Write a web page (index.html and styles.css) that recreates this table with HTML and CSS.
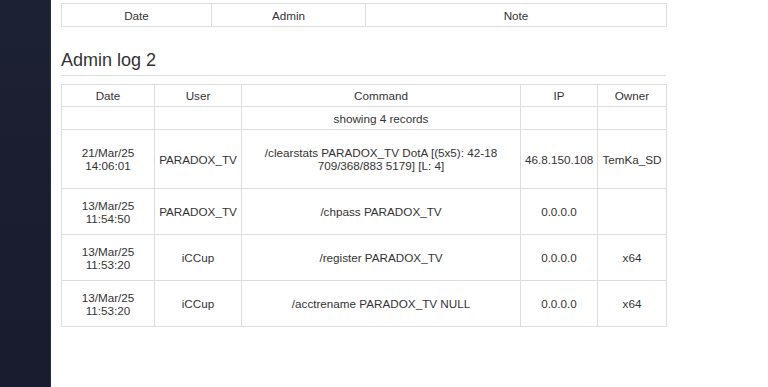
FILE: index.html
```html
<!DOCTYPE html>
<html lang="en">
<head>
<meta charset="utf-8">
<title>Admin log</title>
<link rel="stylesheet" href="styles.css">
</head>
<body>
<div class="layout">
  <aside class="sidebar"></aside>
  <main class="content">
    <table class="log log-top">
      <colgroup>
        <col class="c-tdate"><col class="c-tadmin"><col class="c-tnote">
      </colgroup>
      <thead>
        <tr class="row-head"><th>Date</th><th>Admin</th><th>Note</th></tr>
      </thead>
    </table>

    <h2 class="section-title">Admin log 2</h2>

    <table class="log">
      <colgroup>
        <col class="c-date"><col class="c-user"><col class="c-cmd"><col class="c-ip"><col class="c-owner">
      </colgroup>
      <thead>
        <tr class="row-head"><th>Date</th><th>User</th><th>Command</th><th>IP</th><th>Owner</th></tr>
      </thead>
      <tbody>
        <tr class="row-info"><td></td><td></td><td>showing 4 records</td><td></td><td></td></tr>
        <tr class="row-tall">
          <td>21/Mar/25 14:06:01</td>
          <td>PARADOX_TV</td>
          <td>/clearstats PARADOX_TV DotA [(5x5): 42-18 709/368/883 5179] [L: 4]</td>
          <td>46.8.150.108</td>
          <td>TemKa_SD</td>
        </tr>
        <tr class="row-entry">
          <td>13/Mar/25 11:54:50</td>
          <td>PARADOX_TV</td>
          <td>/chpass PARADOX_TV</td>
          <td>0.0.0.0</td>
          <td></td>
        </tr>
        <tr class="row-entry">
          <td>13/Mar/25 11:53:20</td>
          <td>iCCup</td>
          <td>/register PARADOX_TV</td>
          <td>0.0.0.0</td>
          <td>x64</td>
        </tr>
        <tr class="row-entry">
          <td>13/Mar/25 11:53:20</td>
          <td>iCCup</td>
          <td>/acctrename PARADOX_TV NULL</td>
          <td>0.0.0.0</td>
          <td>x64</td>
        </tr>
      </tbody>
    </table>
  </main>
</div>
</body>
</html>
```

FILE: styles.css
```css
html, body {
  margin: 0;
  height: 100%;
  background: #ffffff;
}

body {
  font-family: "Liberation Sans", Arial, sans-serif;
  color: #333333;
}

.layout {
  display: flex;
  min-height: 100%;
}

.sidebar {
  flex: 0 0 50px;
  background: linear-gradient(180deg, #1d2134 0%, #1b1f31 30%, #191d2f 60%, #181c2e 100%);
  border-right: 1px solid #2a2e3f;
}

.content {
  flex: 1;
  padding: 3px 0 0 10px;
}

.log {
  width: 605px;
  table-layout: fixed;
  border-collapse: collapse;
  font-size: 11.7px;
  line-height: 13px;
  color: #333333;
}

.log th,
.log td {
  border: 1px solid #dddddd;
  padding: 0 4px;
  text-align: center;
  vertical-align: middle;
  font-weight: normal;
}

.c-tdate { width: 150px; }
.c-tadmin { width: 154px; }
.c-tnote { width: 301px; }

.c-date { width: 93px; }
.c-user { width: 87px; }
.c-cmd { width: 279px; }
.c-ip { width: 77px; }
.c-owner { width: 69px; }

.log-top .row-head th { height: 22px; }

.row-head th { height: 21px; }
.row-info td { height: 22px; }
.row-tall td { height: 58px; }
.row-entry td { height: 45px; }

.section-title {
  width: 605px;
  margin: 23px 0 8px;
  padding-bottom: 5px;
  border-bottom: 1px solid #dddddd;
  font-size: 18px;
  line-height: 20px;
  font-weight: normal;
  color: #333333;
}
```
